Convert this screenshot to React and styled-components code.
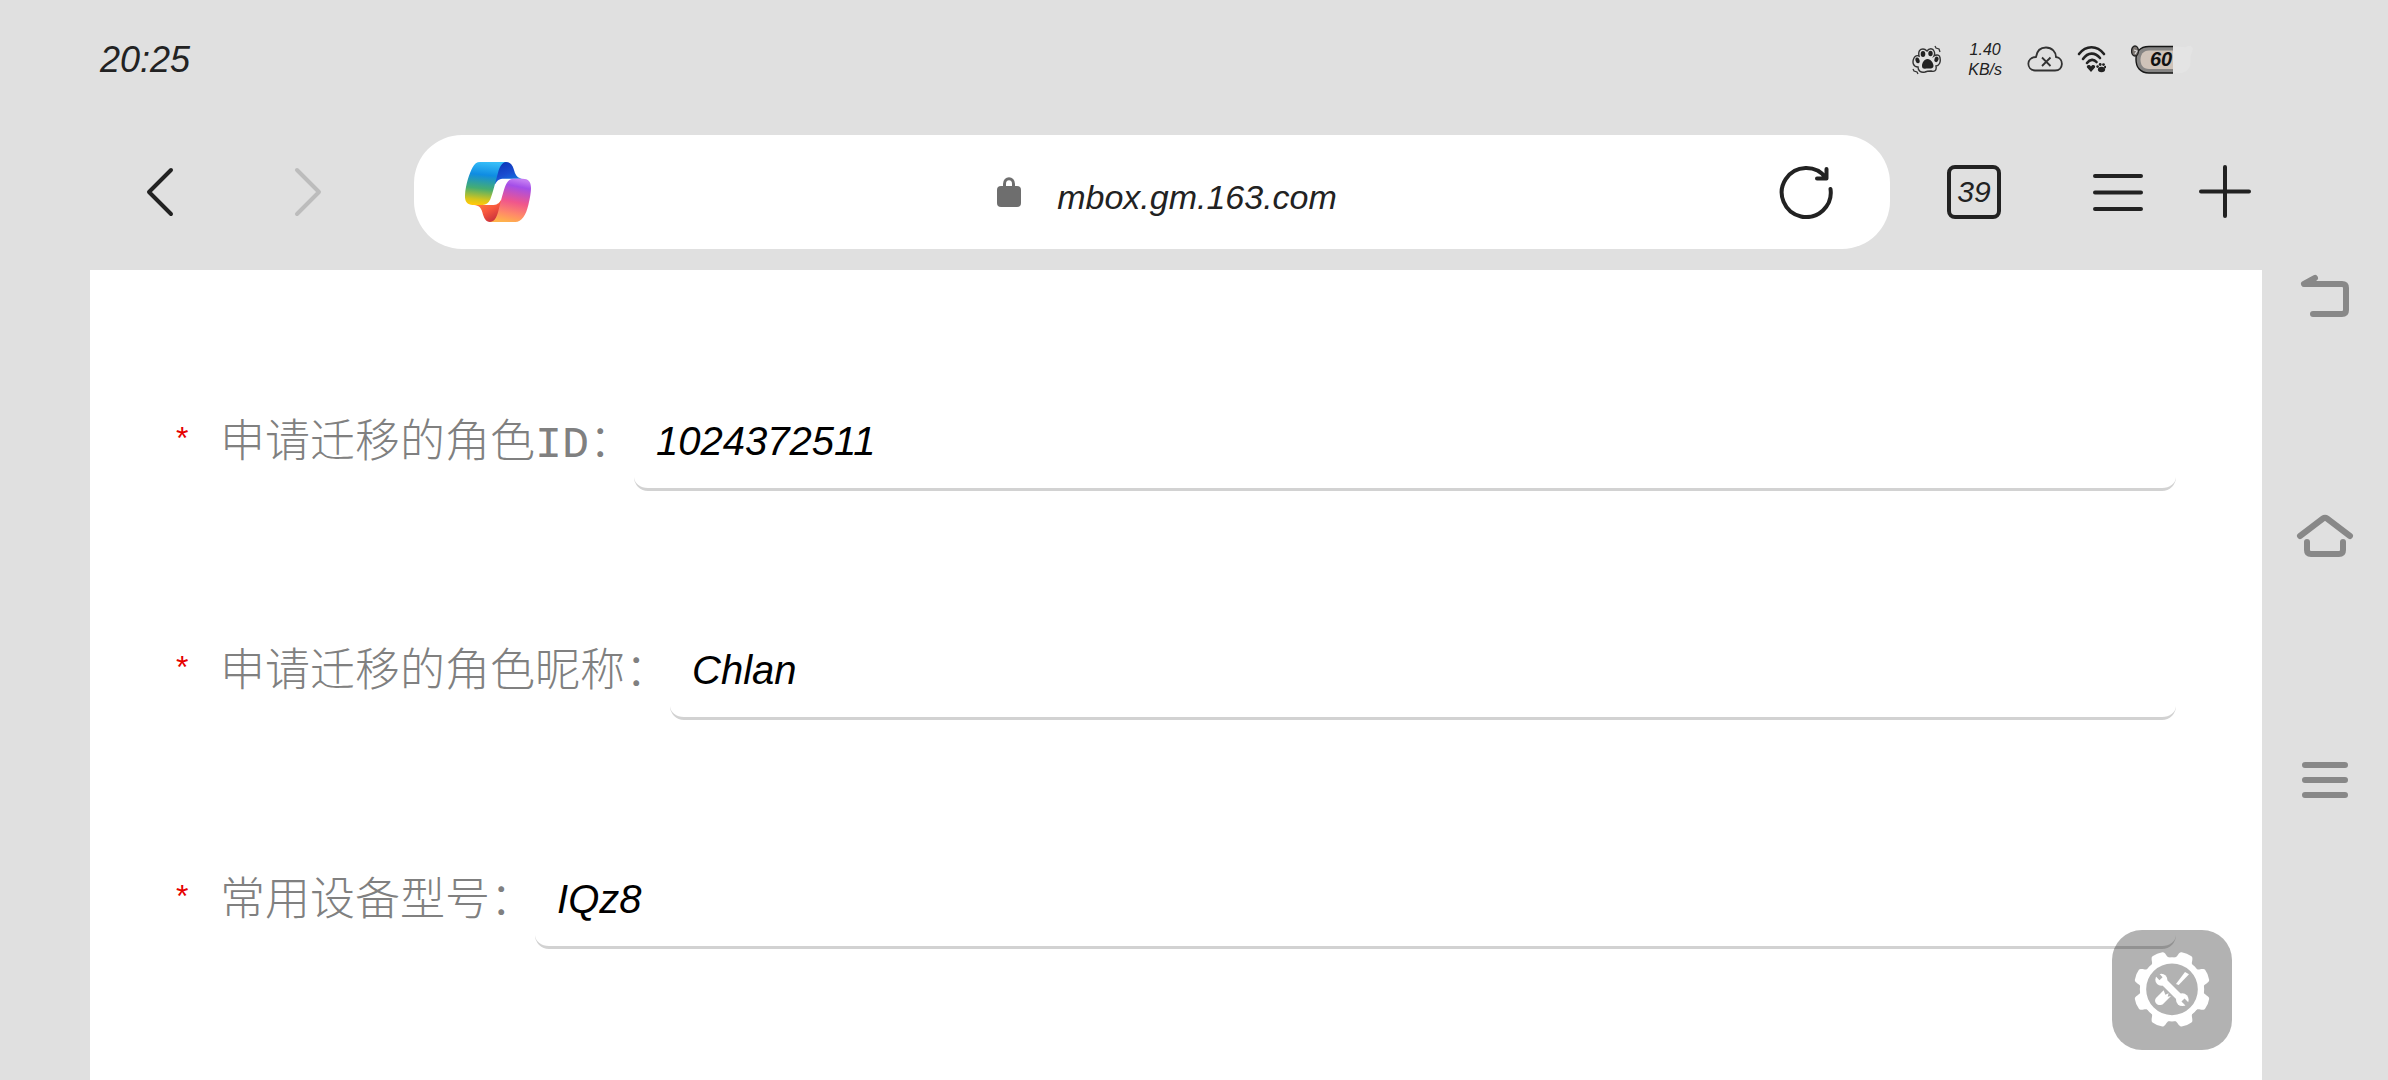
import React, {useState} from 'react'
import styled, {createGlobalStyle} from "styled-components";

const GlobalStyle = createGlobalStyle`
  * {
    box-sizing: border-box;
  }

  body {
    margin: 0;
    background: #e0e0e0;
    color: #222;
    font-family: "Liberation Sans", "Noto Sans CJK SC", sans-serif;
  }

  button, input {
    font-family: inherit;
    color: inherit;
  }
`;

const Screen = styled.div`
  display: flex;
  height: 100vh;
  overflow: hidden;
`;

const Main = styled.div`
  flex: 1;
  min-width: 0;
  display: flex;
  flex-direction: column;
  padding-left: 90px;
`;

const StatusBar = styled.header`
  flex: none;
  display: flex;
  align-items: center;
  justify-content: space-between;
  height: 119px;
  padding: 0 69px 0 10px;
`;

const Clock = styled.time`
  font-size: 36px;
  font-style: italic;
`;

const StatusGroup = styled.div`
  display: flex;
  align-items: center;
  gap: ${(props) => props.$gap}px;
`;

const NetSpeed = styled.div`
  font-size: 16px;
  line-height: 20px;
  font-style: italic;
  text-align: center;
`;

const Toolbar = styled.nav`
  flex: none;
  display: flex;
  align-items: center;
  padding: 16px 0 21px;
`;

const ToolGroup = styled.div`
  display: flex;
  gap: ${(props) => props.$gap}px;
  padding: ${(props) => props.$padding};
`;

const IconButton = styled.button`
  flex: none;
  display: flex;
  align-items: center;
  justify-content: center;
  width: ${(props) => props.$size || 54}px;
  height: ${(props) => props.$size || 54}px;
  padding: 0;
  border: none;
  background: none;

  &:disabled {
    color: #bcbcbc;
  }
`;

const TabsButton = styled(IconButton)`
  margin-right: 36px;
  border: 4px solid #222;
  border-radius: 8px;
  font-size: 30px;
  font-style: italic;
`;

const AddressBar = styled.div`
  flex: 1;
  display: flex;
  align-items: center;
  height: 114px;
  padding: 0 57px 0 51px;
  border-radius: 48px;
  background: #fff;
`;

const AddressButton = styled.button`
  flex: 1;
  display: flex;
  align-items: center;
  justify-content: center;
  gap: 36px;
  height: 100%;
  padding: 0 0 0 24px;
  border: none;
  background: none;
  font-size: 34px;
  font-style: italic;
`;

const Host = styled.span`
  padding-top: 10px;
`;

const Page = styled.main`
  flex: 1;
  padding: 125px 86px 0;
  background: #fff;
`;

const Form = styled.form`
  display: flex;
  flex-direction: column;
  gap: 133px;
`;

const Field = styled.div`
  display: flex;
`;

const Label = styled.label`
  flex: none;
  display: flex;
  align-items: center;
  padding-bottom: 10px;
  color: #808080;
  font-family: "Liberation Mono", "Noto Sans CJK SC", monospace;
  font-size: 45px;
  font-weight: 300;
`;

const Required = styled.span`
  width: 44px;
  color: #e60000;
  font-family: "Liberation Sans", sans-serif;
  font-size: 32px;
`;

const TextInput = styled.input`
  flex: 1;
  min-width: 0;
  height: 96px;
  padding: 0 22px;
  border: none;
  border-bottom: 3px solid #d2d2d2;
  border-radius: 14px;
  outline: none;
  background: none;
  color: #000;
  font-size: 40px;
  font-style: italic;
`;

const SideNav = styled.nav`
  flex: none;
  display: flex;
  flex-direction: column;
  align-items: center;
  justify-content: center;
  gap: 178px;
  width: 126px;
  color: #888;
`;

const ToolsButton = styled.button`
  position: fixed;
  right: 156px;
  bottom: 30px;
  width: 120px;
  height: 120px;
  padding: 0;
  border: none;
  border-radius: 30px;
  background: rgba(0, 0, 0, 0.3);
`;

const Svg = ({w, h, box, children}) => (
    <svg width={w} height={h} viewBox={box || `0 0 ${w} ${h}`} fill="none" aria-hidden="true">
        {children}
    </svg>
)

const Stroke = ({d, width = 4}) => (
    <path d={d} stroke="currentColor" strokeWidth={width} strokeLinecap="round" strokeLinejoin="round"/>
)

const PawIcon = () => (
    <Svg w={31} h={30}>
        <path
            d="M6 22 C1 22 0 17 2 13 C3 11 5 10 7 11 C6 6 8 4 11 4 C13 4 14 5 15 6 C17 3 21 3 22 6 C23 8 23 9 22 11 C25 9 28 10 28 13 C29 17 27 21 24 21 C25 26 22 27 19 26 C17 26 15 26 13 27 C9 28 6 26 6 22Z"
            stroke="#333" strokeWidth="1.4"/>
        <ellipse cx="11" cy="9" rx="2.3" ry="3" fill="#222"/>
        <ellipse cx="18.5" cy="8.5" rx="2.2" ry="2.8" fill="#222"/>
        <ellipse cx="5.4" cy="15.5" rx="2" ry="3" transform="rotate(-18 5 15)" fill="#222"/>
        <ellipse cx="24.6" cy="14.5" rx="2" ry="2.8" transform="rotate(18 25 14)" fill="#222"/>
        <path d="M15.5 14 C19 14 21.5 18 21.5 21 C21.5 24 18 23.5 16 23.5 C13 23.5 10 24.5 10 21 C10 18 12 14 15.5 14Z" fill="#222"/>
        <path d="M23 1 L24 3 L27 4 L28 7 M1 24 L2 26 L5 27 L6 29" stroke="#333" strokeWidth="1.3"/>
    </Svg>
)

const CloudIcon = () => (
    <Svg w={36} h={30}>
        <path
            d="M8 25.5 C-1 24.5 -1 12.5 9 12 C10 5 14 2.5 19 2.5 C25 2.5 29 7 29 12 C37 13 37 25.5 28 25.5Z"
            stroke="#333" strokeWidth="1.8"/>
        <path d="M15 12.5 L23.5 21 M23.5 12.5 L15 21" stroke="#333" strokeWidth="1.8"/>
    </Svg>
)

const WifiIcon = () => (
    <Svg w={29} h={30}>
        <path d="M2 9 C9 0 20 0 27 9 M6 14 C11 7 18 7 23 13 M10 18 C13 14 17 14 19.5 17" stroke="#222"
              strokeWidth="2.6" strokeLinecap="round"/>
        <path d="M14 27 L10 22.5 C9 20 12.5 19 14 21.5 C15.5 19 19 20 18 22.5Z" fill="#222"/>
        <ellipse cx="24.5" cy="24.5" rx="3.6" ry="2.8" fill="#222"/>
        <circle cx="20.6" cy="21.6" r="1.3" fill="#222"/>
        <circle cx="23.2" cy="19.5" r="1.4" fill="#222"/>
        <circle cx="26.5" cy="19.6" r="1.4" fill="#222"/>
        <circle cx="28.2" cy="22" r="1.2" fill="#222"/>
    </Svg>
)

const BatteryIcon = ({level}) => (
    <Svg w={62} h={31}>
        <path d="M42 3 C47 1 51 4 55 3 C60 0 63 3 61 8 C58 14 61 19 58 24 C55 29 48 30 42 29Z" fill="#e4e4e4"/>
        <path d="M42 2.5 H18 C8 2.5 5 9 5 15.5 C5 23 9 29 18 29 H42Z" fill="#858483"/>
        <path d="M42 2.5 H18 C8 2.5 5 9 5 15.5 C5 23 9 29 18 29 H42" stroke="#161616" strokeWidth="1.4"/>
        <path d="M42 6.5 H18 C12 6.5 9.5 11 9.5 15.5 C9.5 21 12 25 18 25 H42Z" fill="#cfc3b9"/>
        <ellipse cx="4" cy="7" rx="3.4" ry="5" fill="#7d7773" stroke="#222" strokeWidth="1.4"/>
        <path d="M3 6 L6 7 L4 10" stroke="#ddd" strokeWidth="1.2"/>
        <text x="19" y="22" fontSize="20" fontStyle="italic" fontWeight="700" fill="#111">{level}</text>
    </Svg>
)

const CopilotLogo = () => (
    <Svg w={66} h={60} box="195 126 198 180">
        <defs>
            <linearGradient id="front" x1="0.5" y1="0" x2="0.4" y2="1">
                <stop offset="0" stopColor="#35bdf8"/>
                <stop offset="0.3" stopColor="#0f8ce2"/>
                <stop offset="0.62" stopColor="#45ad72"/>
                <stop offset="0.88" stopColor="#d5c51c"/>
                <stop offset="1" stopColor="#ffc80a"/>
            </linearGradient>
            <linearGradient id="fold" x1="0.3" y1="0" x2="0.8" y2="1">
                <stop offset="0" stopColor="#0c36b8"/>
                <stop offset="0.5" stopColor="#1a4cd0"/>
                <stop offset="1" stopColor="#1284e4"/>
            </linearGradient>
            <linearGradient id="back" x1="0.6" y1="0" x2="0.4" y2="1">
                <stop offset="0" stopColor="#c47cf2"/>
                <stop offset="0.16" stopColor="#a44ee8"/>
                <stop offset="0.52" stopColor="#f0568c"/>
                <stop offset="0.8" stopColor="#ff8a68"/>
                <stop offset="1" stopColor="#ffb24c"/>
            </linearGradient>
            <linearGradient id="tail" x1="0.1" y1="0" x2="0.8" y2="1">
                <stop offset="0" stopColor="#ff8a3c"/>
                <stop offset="0.5" stopColor="#f8583e"/>
                <stop offset="1" stopColor="#c22b3c"/>
            </linearGradient>
        </defs>
        <path
            d="M300 126 H318 C333 126 339 138 343 153 C347 167 353 174 366 176 H312 C298 176 291 181 286 192 L278 180Z"
            fill="url(#fold)"/>
        <path
            d="M240 126 H318 C306 127 299 140 294 158 C286 188 279 215 271 238 C266 250 258 255 248 255 H218 C200 255 194 243 195 225 C197 195 208 160 218 142 C224 131 230 126 240 126Z"
            fill="url(#front)"/>
        <path d="M222 255 H276 C290 255 297 251 303 240 L306 270 L290 306 H270 C257 306 252 295 247 277 C243 262 237 257 222 255Z"
              fill="url(#tail)"/>
        <path
            d="M270 306 H346 C365 306 378 285 385 255 C390 235 393 215 393 203 C393 185 385 176 368 176 H340 C326 177 319 188 314 203 C306 229 302 245 297 265 C292 288 286 305 270 306Z"
            fill="url(#back)"/>
    </Svg>
)

const LockIcon = () => (
    <Svg w={24} h={30}>
        <path d="M7.5 12 V7 C7.5 0 16.5 0 16.5 7 V12" stroke="#6e6e6e" strokeWidth="3"/>
        <rect y="9" width="24" height="21" rx="4" fill="#6e6e6e"/>
    </Svg>
)

const TEETH = [22.5, 67.5, 112.5, 157.5, 202.5, 247.5, 292.5, 337.5];

const GearIcon = () => (
    <Svg w={120} h={120} box="66 570 360 360">
        <mask id="jaws" maskUnits="userSpaceOnUse" x="150" y="650" width="200" height="200">
            <rect x="150" y="650" width="200" height="200" fill="#fff"/>
            <path d="M198 700 L213 716 M294 795 L279 780" stroke="#000" strokeWidth="13"/>
        </mask>
        <g transform="translate(246 748)">
            <circle r="87" stroke="#fff" strokeWidth="19"/>
            {TEETH.map((angle) => (
                <path key={angle} transform={`rotate(${angle})`} fill="#fff"
                      d="M-32 -88 C-22 -94 -25 -100 -21 -109 Q-20 -113 -16 -114 Q0 -118 16 -114 Q20 -113 21 -109 C25 -100 22 -94 32 -88Z"/>
            ))}
        </g>
        <path d="M258 732 L285 696 L297 703 L266 735Z" fill="#fff"/>
        <path d="M221 751 L198 774 C188 787 207 803 220 791 L243 768 L233 770 L236 760 L226 764Z" fill="#fff"/>
        <g mask="url(#jaws)">
            <path d="M222 726 L271 775" stroke="#fff" strokeWidth="21"/>
            <circle cx="214" cy="719" r="18" fill="#fff"/>
            <circle cx="277" cy="779" r="19" fill="#fff"/>
        </g>
    </Svg>
)

const FIELDS = [
    {name: "roleId", title: "申请迁移的角色ID：", value: "1024372511"},
    {name: "nickname", title: "申请迁移的角色昵称：", value: "Chlan"},
    {name: "device", title: "常用设备型号：", value: "IQz8"},
];

const FormField = ({field, value, onChange}) => (
    <Field>
        <Label htmlFor={field.name}>
            <Required>*</Required>
            {field.title}
        </Label>
        <TextInput
            id={field.name}
            name={field.name}
            type="text"
            autoComplete="off"
            spellCheck={false}
            value={value}
            onChange={(e) => onChange(field.name, e.target.value)}
        />
    </Field>
)

const App = () => {
    const [values, setValues] = useState(
        Object.fromEntries(FIELDS.map((item) => [item.name, item.value]))
    );

    const _change = (name, value) => {
        setValues({...values, [name]: value});
    }

    return (
        <Screen>
            <GlobalStyle/>
            <Main>
                <StatusBar>
                    <Clock>20:25</Clock>
                    <StatusGroup $gap={25}>
                        <PawIcon/>
                        <NetSpeed>
                            <div>1.40</div>
                            <div>KB/s</div>
                        </NetSpeed>
                        <StatusGroup $gap={14}>
                            <CloudIcon/>
                            <WifiIcon/>
                        </StatusGroup>
                        <BatteryIcon level="60"/>
                    </StatusGroup>
                </StatusBar>

                <Toolbar>
                    <ToolGroup $gap={94} $padding="0 79px 0 43px">
                        <IconButton type="button" aria-label="后退">
                            <Svg w={54} h={54}><Stroke d="M38 5 L16 27 L38 49"/></Svg>
                        </IconButton>
                        <IconButton type="button" aria-label="前进" disabled>
                            <Svg w={54} h={54}><Stroke d="M16 5 L38 27 L16 49"/></Svg>
                        </IconButton>
                    </ToolGroup>
                    <AddressBar>
                        <CopilotLogo/>
                        <AddressButton type="button">
                            <LockIcon/>
                            <Host>mbox.gm.163.com</Host>
                        </AddressButton>
                        <IconButton type="button" aria-label="刷新">
                            <Svg w={54} h={54}>
                                <Stroke d="M51.5 24 A24.5 24.5 0 1 1 47 13 M47.5 4 V13.5 H38"/>
                            </Svg>
                        </IconButton>
                    </AddressBar>
                    <ToolGroup $gap={54} $padding="0 9px 0 57px">
                        <TabsButton type="button">39</TabsButton>
                        <IconButton type="button" aria-label="菜单">
                            <Svg w={54} h={54}><Stroke d="M4 11 H50 M4 27.5 H50 M4 44 H50"/></Svg>
                        </IconButton>
                        <IconButton type="button" aria-label="新标签页">
                            <Svg w={54} h={54}><Stroke d="M26 2 V51 M2 26.5 H50"/></Svg>
                        </IconButton>
                    </ToolGroup>
                </Toolbar>

                <Page>
                    <Form>
                        {FIELDS.map((item) => (
                            <FormField key={item.name} field={item} value={values[item.name]} onChange={_change}/>
                        ))}
                    </Form>
                </Page>
            </Main>

            <SideNav>
                <IconButton type="button" aria-label="返回" $size={64}>
                    <Svg w={64} h={64}><Stroke width={6} d="M22 12 L11 18 H49 Q53 18 53 22 V44 Q53 48 49 48 H20"/></Svg>
                </IconButton>
                <IconButton type="button" aria-label="主页" $size={64}>
                    <Svg w={64} h={64}>
                        <Stroke width={6} d="M7 28 L30 10.5 Q32 9 34 10.5 L57 28 M14 34 V42 Q14 46 18 46 H46 Q50 46 50 42 V34"/>
                    </Svg>
                </IconButton>
                <IconButton type="button" aria-label="最近任务" $size={64}>
                    <Svg w={64} h={64}><Stroke width={6} d="M12 15 H52 M12 30 H52 M12 45 H52"/></Svg>
                </IconButton>
            </SideNav>

            <ToolsButton type="button" aria-label="工具">
                <GearIcon/>
            </ToolsButton>
        </Screen>
    )
}

export default App
